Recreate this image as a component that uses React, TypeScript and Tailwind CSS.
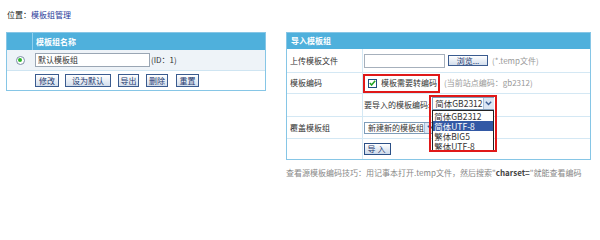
import React from "react"

function Btn({ children, w }: { children: React.ReactNode; w: string }) {
  return (
    <div
      className={`${w} flex h-[13px] items-center justify-center whitespace-nowrap border border-[#3a5b8f] bg-gradient-to-b from-white to-[#d3deec] text-[8px] leading-none text-[#1d3a70]`}
    >
      {children}
    </div>
  )
}

function Arrow() {
  return (
    <div className="flex h-full w-[11px] shrink-0 items-center justify-center border-l border-[#a9bfd8] bg-[#dbe6f3]">
      <svg width="7" height="5" viewBox="0 0 7 5">
        <path d="M0.8 0.8 L3.5 3.6 L6.2 0.8" stroke="#3b5f95" strokeWidth="1.4" fill="none" />
      </svg>
    </div>
  )
}

export default function App() {
  return (
    <div className="relative h-[207px] w-[600px] overflow-hidden whitespace-nowrap bg-white font-['Noto_Sans_CJK_SC',sans-serif] text-[8px] leading-none text-[#333]">
      {/* 位置 */}
      <div className="h-[32px] pl-[7px] pt-[10px] text-[8px] leading-[9px] text-[#222]">
        位置：<span className="text-[#1f3a9a]">模板组管理</span>
      </div>

      <div className="flex items-start gap-[20px] pl-[6px]">
        {/* Left table */}
        <div className="w-[260px] border border-[#86c6e6]">
          <div className="grid h-[17px] grid-cols-[26px_1fr] bg-[#4fb0dc]">
            <div className="border-r border-[#8fd0ee]" />
            <div className="flex items-center pl-[3px] font-bold text-white">模板组名称</div>
          </div>
          <div className="grid h-[21px] grid-cols-[26px_1fr] border-b border-[#cfe5f2] bg-[#eef3f8]">
            <div className="flex items-center justify-center">
              <div className="flex h-[9px] w-[9px] items-center justify-center rounded-full border border-[#7d8ea8] bg-white">
                <div className="h-[4px] w-[4px] rounded-full bg-[#2db52d]" />
              </div>
            </div>
            <div className="flex items-center pl-[2px]">
              <div className="flex h-[14px] w-[115px] items-center border border-[#9aa6b4] bg-white pl-[2px]">默认模板组</div>
              <span className="ml-[1px] text-[#333]">(ID：1)</span>
            </div>
          </div>
          <div className="grid h-[19px] grid-cols-[26px_1fr]">
            <div />
            <div className="flex items-center pl-[2px]">
              <Btn w="w-[24px]">修改</Btn>
              <div className="w-[6px]" />
              <Btn w="w-[46px]">设为默认</Btn>
              <div className="w-[7px]" />
              <Btn w="w-[21px]">导出</Btn>
              <div className="w-[7px]" />
              <Btn w="w-[22px]">删除</Btn>
              <div className="w-[8px]" />
              <Btn w="w-[23px]">重置</Btn>
            </div>
          </div>
        </div>

        {/* Right column */}
        <div className="w-[305px]">
          <div className="border border-[#86c6e6]">
            <div className="flex h-[16px] items-center bg-[#4fb0dc] pl-[4px] font-bold text-white">导入模板组</div>
            <div className="grid h-[24px] grid-cols-[76px_1fr] border-b border-[#d4e8f4]">
              <div className="flex items-center border-r border-[#d4e8f4] pl-[3px]">上传模板文件</div>
              <div className="flex items-center pl-[1px]">
                <div className="h-[14px] w-[81px] border border-[#a6b0bc] bg-white" />
                <div className="w-[3px]" />
                <div className="flex h-[11px] w-[40px] items-center justify-center border border-[#3a5b8f] bg-gradient-to-b from-white to-[#d3deec] text-[#1d3a70]">
                  浏览...
                </div>
                <span className="ml-[4px] text-[#999]">(*.temp文件)</span>
              </div>
            </div>
            <div className="grid h-[21px] grid-cols-[76px_1fr] border-b border-[#d4e8f4]">
              <div className="flex items-center border-r border-[#d4e8f4] pl-[3px]">模板编码</div>
              <div className="flex items-center">
                <div className="flex h-[19px] w-[77px] items-center border-2 border-[#e01818] pl-[3px]">
                  <div className="flex h-[9px] w-[9px] shrink-0 items-center justify-center border border-[#1f4e7e] bg-white">
                    <svg width="7" height="6" viewBox="0 0 7 6">
                      <path d="M0.8 3 L2.6 5 L6.2 0.8" stroke="#21a321" strokeWidth="1.5" fill="none" />
                    </svg>
                  </div>
                  <span className="ml-[4px]">模板需要转编码</span>
                </div>
                <span className="ml-[4px] text-[#999]">(当前站点编码：gb2312)</span>
              </div>
            </div>
            <div className="grid h-[23px] grid-cols-[76px_1fr] border-b border-[#d4e8f4]">
              <div className="border-r border-[#d4e8f4]" />
              <div className="flex items-center pl-[1px]">
                <span>要导入的模板编码:</span>
                <div className="relative ml-[2px] mt-[-3px]">
                  <div className="flex h-[13px] w-[62px] items-center border border-[#7f9db9] bg-white">
                    <span className="flex-1 pl-[2px] text-[8.5px]">简体GB2312</span>
                    <Arrow />
                  </div>
                  <div className="absolute left-0 top-[13px] z-10 w-[62px] border border-[#222] bg-white text-[8.5px] leading-[10px]">
                    <div className="h-[10px] pl-[1px]">简体GB2312</div>
                    <div className="h-[10px] bg-[#3359a5] pl-[1px] text-white">简体UTF-8</div>
                    <div className="h-[10px] pl-[1px]">繁体BIG5</div>
                    <div className="h-[10px] pl-[1px]">繁体UTF-8</div>
                  </div>
                  <div className="absolute left-[-3px] top-[-2px] z-20 h-[57px] w-[68px] border-2 border-[#e01818]" />
                </div>
              </div>
            </div>
            <div className="grid h-[22px] grid-cols-[76px_1fr] border-b border-[#d4e8f4]">
              <div className="flex items-center border-r border-[#d4e8f4] pl-[3px]">覆盖模板组</div>
              <div className="flex items-center pl-[1px]">
                <div className="flex h-[12px] w-[72px] items-center border border-[#7f9db9] bg-white">
                  <span className="flex-1 pl-[3px]">新建新的模板组</span>
                  <Arrow />
                </div>
              </div>
            </div>
            <div className="grid h-[20px] grid-cols-[76px_1fr]">
              <div className="border-r border-[#d4e8f4]" />
              <div className="flex items-center pl-[1px]">
                <div className="flex h-[12px] w-[27px] items-center justify-center border border-[#2b4f86] bg-gradient-to-b from-white to-[#cbd8ea] tracking-[2px] text-[#1d3a70]">
                  导入
                </div>
              </div>
            </div>
          </div>
          <div className="mt-[8px] leading-[9px] text-[#888]">
            查看源模板编码技巧：用记事本打开.temp文件，然后搜索"<span className="font-bold text-[#444]">charset=</span>"就能查看编码
          </div>
        </div>
      </div>
    </div>
  )
}
